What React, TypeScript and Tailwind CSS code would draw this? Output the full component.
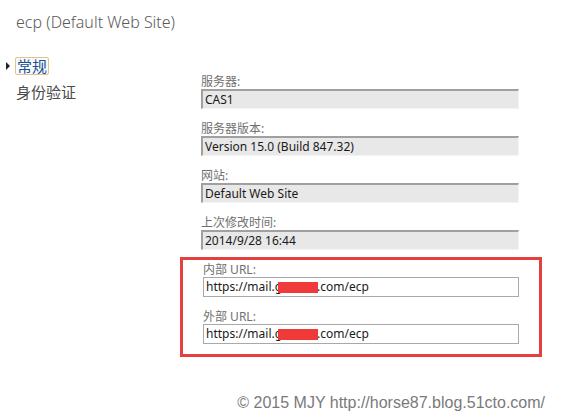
import React from 'react'

const cjk = '"Segoe UI", "Noto Sans", "Noto Sans CJK SC", sans-serif'

function ReadOnlyField({ label, value }: { label: string; value: string }) {
  return (
    <div className="flex flex-col mb-[13px]">
      <div className="h-[14px] leading-[14px] text-[12px] text-[#707070]">{label}</div>
      <div className="h-[20px] w-[318px] bg-[#e8e8e8] border-t-2 border-l-2 border-t-[#a0a0a0] border-l-[#a0a0a0] border-r border-b border-r-[#f4f4f4] border-b-[#f4f4f4] pl-[2px] text-[12px] leading-[17px] text-[#1a1a1a]">
        {value}
      </div>
    </div>
  )
}

function UrlField({ label, last }: { label: string; last?: boolean }) {
  return (
    <div className={`flex flex-col ${last ? '' : 'mb-[13px]'}`}>
      <div className="h-[14px] leading-[14px] text-[12px] text-[#707070]">{label}</div>
      <div className="relative h-[20px] w-[316px] bg-white border border-[#a9a9a9] pl-[2px] text-[12px] leading-[18px] text-[#1a1a1a] whitespace-nowrap">
        https://mail.g<span className="inline-block w-[35px]" />.com/ecp
        {/* redaction */}
        <div className="absolute left-[74px] top-[4px] w-[40px] h-[11px] bg-[#f03a3a]" />
      </div>
    </div>
  )
}

export default function App() {
  return (
    <div className="relative w-[561px] h-[417px] bg-white overflow-hidden" style={{ fontFamily: cjk }}>
      {/* Title */}
      <div className="pt-[10px] pl-[16px] text-[16px] leading-[24px] text-[#5a5a5a] font-light">ecp (Default Web Site)</div>

      <div className="flex mt-[21px]">
        {/* Left nav */}
        <div className="w-[201px] flex flex-col pt-[2px]">
          <div className="flex items-center h-[18px]">
            <span className="ml-[6px] w-0 h-0 border-y-[4px] border-y-transparent border-l-[4px] border-l-[#222]" />
            <span className="ml-[5px] px-[1px] h-[18px] leading-[16px] border border-[#e0c48c] rounded-[2px] bg-[#f7fbff] text-[15px] text-[#1e4f8c]">
              常规
            </span>
          </div>
          <div className="pl-[16px] mt-[8px] text-[15px] leading-[18px] text-[#4a4a4a]">身份验证</div>
        </div>

        {/* Form */}
        <div className="flex flex-col pt-[20px]">
          <ReadOnlyField label="服务器:" value="CAS1" />
          <ReadOnlyField label="服务器版本:" value="Version 15.0 (Build 847.32)" />
          <ReadOnlyField label="网站:" value="Default Web Site" />
          <ReadOnlyField label="上次修改时间:" value="2014/9/28 16:44" />

          <div className="-mt-[6px] -ml-[21px] w-[362px] border-[3px] border-[#e5403f] pt-[3px] pb-[10px] pl-[20px]">
            <UrlField label="内部 URL:" />
            <UrlField label="外部 URL:" last />
          </div>
        </div>
      </div>

      {/* Footer watermark */}
      <div
        className="absolute right-[16px] bottom-[5px] text-[16px] leading-[18px] text-[#7a7a7a]"
        style={{ fontFamily: '"Liberation Sans", Arial, sans-serif' }}
      >
        © 2015 MJY http://horse87.blog.51cto.com/
      </div>
    </div>
  )
}
